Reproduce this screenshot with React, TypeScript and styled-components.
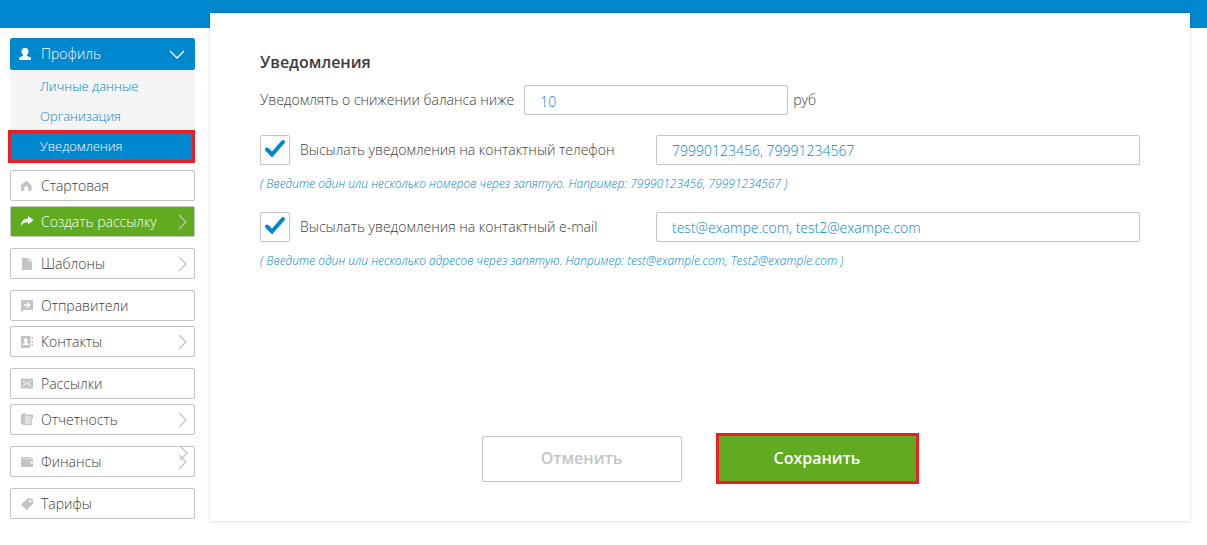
import React, { useState } from 'react';
import styled, { createGlobalStyle, css } from 'styled-components';

const blue = '#0088ce';
const green = '#60ab20';
const line = '#c4c4c4';
const alertRed = '#ee1c25';
const ink = '#3c3c3c';

const GlobalStyle = createGlobalStyle`
  *, *::before, *::after { box-sizing: border-box; }
  body {
    margin: 0;
    background: #fff;
    color: ${ink};
    font: 300 14px/20px 'Open Sans', 'Noto Sans', sans-serif;
  }
  button, input { font: inherit; }
  ul { list-style: none; margin: 0; padding: 0; }
`;

const TopBar = styled.header`
  height: 28px;
  background: ${blue};
`;

const Layout = styled.div`
  display: flex;
  align-items: flex-start;
  gap: 15px;
  padding: 0 17px 24px 10px;
`;

const Sidebar = styled.nav`
  flex: none;
  width: 185px;
  padding-top: 10px;
`;

const MenuGroup = styled.ul`
  display: flex;
  flex-direction: column;
  gap: 5px;
  margin-bottom: 11px;
`;

type Tone = 'plain' | 'profile' | 'create';

const MenuLink = styled.a<{ $tone: Tone }>`
  position: relative;
  display: flex;
  align-items: center;
  gap: 6px;
  height: 31px;
  padding: 0 6px 0 9px;
  border: 1px solid ${line};
  border-radius: 2px;
  color: ${ink};
  text-decoration: none;

  ${({ $tone }) => $tone === 'profile' && css`
    gap: 8px;
    height: 32px;
    padding: 0 8px 0 7px;
    border-color: ${blue};
    background: ${blue};
    color: #fff;
  `}
  ${({ $tone }) => $tone === 'create' && css`
    background: ${green};
    color: #fff;
  `}
`;

const MenuLabel = styled.span`
  flex: 1;
`;

const Glyph = styled.svg<{ $tone: Tone }>`
  flex: none;
  width: 15px;
  height: 15px;
  color: ${({ $tone }) => ($tone === 'plain' ? line : '#fff')};
`;

const Arrow = styled.svg<{ $down?: boolean }>`
  flex: none;
  width: ${({ $down }) => ($down ? 18 : 10)}px;
  height: ${({ $down }) => ($down ? 10 : 16)}px;
  fill: none;
  stroke: ${({ $down }) => ($down ? '#fff' : line)};
  stroke-width: 1.3;
`;

const StrayArrow = styled(Arrow)`
  position: absolute;
  top: -2px;
  right: 5px;
`;

const SubMenu = styled.ul`
  margin-bottom: 7px;
  background: #f5f5f5;
`;

const SubLink = styled.a<{ $active?: boolean }>`
  display: block;
  height: 30px;
  padding: 0 30px;
  color: ${blue};
  font-size: 13px;
  line-height: 32px;
  text-decoration: none;

  ${({ $active }) => $active && css`
    height: 33px;
    margin-left: -2px;
    padding-left: 29px;
    border: 3px solid ${alertRed};
    background: ${blue};
    color: #fff;
    line-height: 26px;
  `}
`;

const Panel = styled.main`
  flex: 1;
  min-width: 0;
  margin-top: -15px;
  padding: 38px 50px 37px;
  background: #fff;
  box-shadow: 0 0 3px rgba(0, 0, 0, 0.2);
`;

const Title = styled.h1`
  margin: 0 0 12px;
  font-size: 16px;
  font-weight: 600;
  line-height: 22px;
`;

const BalanceRow = styled.div`
  display: flex;
  align-items: center;
  margin-bottom: 20px;
`;

const BalanceLabel = styled.label`
  flex: none;
  margin-right: 10px;
`;

const TextField = styled.input`
  width: 100%;
  height: 30px;
  padding: 0 15px;
  border: 1px solid ${line};
  border-radius: 2px;
  background: #fff;
  color: ${blue};
  outline: 0;
`;

const BalanceField = styled(TextField)`
  width: 30%;
  margin-right: 5px;
  padding-top: 2px;
`;

const ChannelRow = styled.div`
  display: grid;
  grid-template-columns: 45% 55%;
  align-items: center;
`;

const CheckLabel = styled.label`
  display: flex;
  align-items: center;
  gap: 10px;
`;

const CheckCell = styled.span`
  display: grid;
  width: 30px;
  height: 30px;

  & > * { grid-area: 1 / 1; }
`;

const CheckBox = styled.input`
  appearance: none;
  width: 30px;
  height: 30px;
  margin: 0;
  border: 1px solid ${line};
  border-radius: 2px;
  background: #fff;
  cursor: pointer;

  &:not(:checked) + svg { visibility: hidden; }
`;

const CheckMark = styled.svg`
  width: 30px;
  height: 30px;
  fill: none;
  stroke: ${blue};
  stroke-width: 4;
  stroke-linecap: round;
  pointer-events: none;
`;

const Hint = styled.p`
  margin: 10px 0 19px;
  color: ${blue};
  font-size: 12px;
  font-style: italic;
  line-height: 18px;
`;

const Actions = styled.div`
  display: flex;
  align-items: center;
  justify-content: center;
  gap: 34px;
  margin-top: 163px;
`;

const ActionButton = styled.button<{ $primary?: boolean }>`
  width: 200px;
  height: 46px;
  padding: 0 0 2px;
  border: 1px solid ${line};
  border-radius: 2px;
  background: #fff;
  color: ${line};
  font-size: 16px;
  font-weight: 600;
  cursor: pointer;

  ${({ $primary }) => $primary && css`
    width: 203px;
    height: 51px;
    border: 3px solid ${alertRed};
    border-radius: 0;
    background: ${green};
    color: #fff;
  `}
`;

const icons = {
  user: <path d="M7 1C9.300 1 10.500 2.300 10.500 4.200C10.500 5.800 9.800 7 9 7.800V9L12.200 10.300C12.800 10.600 13 11 13 11.600V13H1V11.600C1 11 1.200 10.600 1.800 10.300L5 9V7.800C4.200 7 3.500 5.800 3.500 4.200C3.500 2.300 4.700 1 7 1Z" fill="currentColor" />,
  home: <path d="M6.200 2.800L11.500 7V13H8.200V9.800C8.200 7.600 4.300 7.600 4.300 9.800V13H1V7Z" fill="currentColor" />,
  share: <path d="M8 2L13.500 6.300L8 10.500V8.200C4.700 8 3 8.700 1 12C1.200 7.300 3.500 4.700 8 4.500Z" fill="currentColor" />,
  file: <path d="M2 2H8.500V5.500H12V14H2Z M9.300 2L12 4.700H9.300Z" fill="currentColor" />,
  sender: (
    <>
      <path d="M1 2H13V12H4L1 14.500Z" fill="currentColor" />
      <path d="M4 7H9.500M7.200 4.500L9.700 7L7.200 9.500" fill="none" stroke="#fff" strokeWidth="1.400" />
    </>
  ),
  contacts: (
    <>
      <path d="M1 2H10.500V14H1Z M11.500 3H13V5H11.500Z M11.500 6.500H13V8.500H11.500Z M11.500 10H13V12H11.500Z" fill="currentColor" />
      <path d="M5.800 4.300C8 4.300 7.800 7 6.800 8V8.800L8.800 9.800V11H2.800V9.800L4.800 8.800V8C3.800 7 3.600 4.300 5.800 4.300Z" fill="#fff" />
    </>
  ),
  mail: (
    <>
      <path d="M1 2.500H13V12.500H1Z" fill="currentColor" />
      <path d="M3 5L7 8.300L11 5M3 10.500L5.500 7.500M11 10.500L8.500 7.500" fill="none" stroke="#fff" />
    </>
  ),
  report: (
    <>
      <path d="M1 2.500L5.500 .5V13.500L1 12Z" fill="currentColor" />
      <path d="M6 3H12.500V5.500H11.500V12.500H6Z" fill="currentColor" opacity=".5" />
      <path d="M6 2.500H13V6.500H11.500V4H6Z M6 12H11.500V13H6Z M10.500 5H11.500V13H10.500Z" fill="currentColor" />
    </>
  ),
  wallet: <path d="M1 3H11.500V4H1Z M1 4.500H13V7.500H10.500V10H13V13H1Z M11.500 8.200H13V9.400H11.500Z" fill="currentColor" />,
  tag: <path fillRule="evenodd" d="M7.500 2.500H12L13 3.500V8L6.500 14L1 8.800Z M10.300 4A1.300 1.300 0 1 0 10.300 6.600A1.300 1.300 0 1 0 10.300 4Z" fill="currentColor" />,
};

interface Entry {
  icon: keyof typeof icons;
  label: string;
  tone?: Tone;
  arrow?: boolean;
  stray?: boolean;
}

const groups: Entry[][] = [
  [{ icon: 'home', label: 'Стартовая' }, { icon: 'share', label: 'Создать рассылку', tone: 'create', arrow: true }],
  [{ icon: 'file', label: 'Шаблоны', arrow: true }],
  [{ icon: 'sender', label: 'Отправители' }, { icon: 'contacts', label: 'Контакты', arrow: true }],
  [{ icon: 'mail', label: 'Рассылки' }, { icon: 'report', label: 'Отчетность', arrow: true }],
  [{ icon: 'wallet', label: 'Финансы', arrow: true, stray: true }],
  [{ icon: 'tag', label: 'Тарифы' }],
];

const arrowPath = <path d="M1 1L8 8L1 15" />;

function MenuItem({ icon, label, tone = 'plain', arrow, stray }: Entry) {
  return (
    <li>
      <MenuLink href="#" $tone={tone}>
        <Glyph $tone={tone} viewBox="0 0 15 15" aria-hidden="true">{icons[icon]}</Glyph>
        <MenuLabel>{label}</MenuLabel>
        {arrow && <Arrow viewBox="0 0 10 16" aria-hidden="true">{arrowPath}</Arrow>}
        {stray && <StrayArrow viewBox="0 0 10 16" aria-hidden="true">{arrowPath}</StrayArrow>}
      </MenuLink>
    </li>
  );
}

interface ChannelProps {
  id: string;
  label: string;
  initial: string;
  hint: string;
}

function Channel({ id, label, initial, hint }: ChannelProps) {
  const [enabled, setEnabled] = useState(true);
  const [value, setValue] = useState(initial);
  return (
    <>
      <ChannelRow>
        <CheckLabel>
          <CheckCell>
            <CheckBox type="checkbox" checked={enabled} onChange={(e) => setEnabled(e.target.checked)} />
            <CheckMark viewBox="0 0 30 30" aria-hidden="true"><path d="M7 14.500L12 19.500L23 7" /></CheckMark>
          </CheckCell>
          {label}
        </CheckLabel>
        <TextField
          aria-label={label}
          aria-describedby={id}
          value={value}
          onChange={(e) => setValue(e.target.value)}
        />
      </ChannelRow>
      <Hint id={id}>{hint}</Hint>
    </>
  );
}

export default function App() {
  const [balance, setBalance] = useState('10');
  return (
    <>
      <GlobalStyle />
      <TopBar />
      <Layout>
        <Sidebar>
          <MenuLink href="#" $tone="profile">
            <Glyph $tone="profile" viewBox="0 0 15 15" aria-hidden="true">{icons.user}</Glyph>
            <MenuLabel>Профиль</MenuLabel>
            <Arrow $down viewBox="0 0 18 10" aria-hidden="true"><path d="M2 2L9 9L16 2" /></Arrow>
          </MenuLink>
          <SubMenu>
            <li><SubLink href="#">Личные данные</SubLink></li>
            <li><SubLink href="#">Организация</SubLink></li>
            <li><SubLink href="#" $active aria-current="page">Уведомления</SubLink></li>
          </SubMenu>
          {groups.map((group) => (
            <MenuGroup key={group[0].label}>
              {group.map((entry) => <MenuItem key={entry.label} {...entry} />)}
            </MenuGroup>
          ))}
        </Sidebar>
        <Panel>
          <Title>Уведомления</Title>
          <form onSubmit={(e) => e.preventDefault()}>
            <BalanceRow>
              <BalanceLabel htmlFor="balance">Уведомлять о снижении баланса ниже</BalanceLabel>
              <BalanceField id="balance" value={balance} onChange={(e) => setBalance(e.target.value)} />
              <span>руб</span>
            </BalanceRow>
            <Channel
              id="phone-hint"
              label="Высылать уведомления на контактный телефон"
              initial="79990123456, 79991234567"
              hint="( Введите один или несколько номеров через запятую. Например: 79990123456, 79991234567 )"
            />
            <Channel
              id="email-hint"
              label="Высылать уведомления на контактный e-mail"
              initial="test@exampe.com, test2@exampe.com"
              hint="( Введите один или несколько адресов через запятую. Например: test@example.com, Test2@example.com )"
            />
            <Actions>
              <ActionButton type="button">Отменить</ActionButton>
              <ActionButton type="submit" $primary>Сохранить</ActionButton>
            </Actions>
          </form>
        </Panel>
      </Layout>
    </>
  );
}
